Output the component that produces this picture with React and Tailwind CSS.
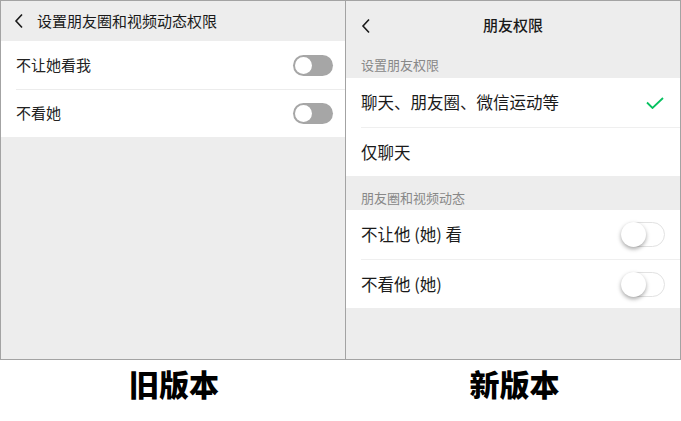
import React from "react";

const font = { fontFamily: '"Noto Sans CJK SC", "Noto Sans", sans-serif' };

function Chevron() {
  return (
    <svg width="10" height="16" viewBox="0 0 10 16" fill="none">
      <path d="M8 1.5 L2 8 L8 14.5" stroke="#1a1a1a" strokeWidth="1.6" />
    </svg>
  );
}

function OldToggle() {
  return (
    <div className="w-[40px] h-[21px] rounded-full bg-[#a6a6a6] flex items-center px-[2px]">
      <div className="w-[17px] h-[17px] rounded-full bg-white" />
    </div>
  );
}

function NewToggle() {
  return (
    <div className="relative w-[44px] h-[25px] rounded-full border border-[#e2e2e2] bg-white">
      <div className="absolute left-[-1px] top-[-1px] w-[25px] h-[25px] rounded-full bg-white shadow-[0_2px_4px_rgba(0,0,0,0.35)]" />
    </div>
  );
}

function OldPanel() {
  return (
    <div className="w-[345px] border-r border-[#a3a3a3] bg-[#ededed] flex flex-col">
      <div className="h-[40px] flex items-center pl-[13px] gap-[13px]">
        <Chevron />
        <span className="text-[15px] text-[#1a1a1a]">设置朋友圈和视频动态权限</span>
      </div>
      <div className="bg-white">
        <div className="h-[48px] flex items-center justify-between pl-[15px] pr-[12px]">
          <span className="text-[15px] text-[#222]">不让她看我</span>
          <OldToggle />
        </div>
        <div className="ml-[15px] border-t border-[#ececec]" />
        <div className="h-[47px] flex items-center justify-between pl-[15px] pr-[12px]">
          <span className="text-[15px] text-[#222]">不看她</span>
          <OldToggle />
        </div>
      </div>
    </div>
  );
}

function NewPanel() {
  return (
    <div className="flex-1 bg-[#ededed] flex flex-col">
      <div className="h-[49px] relative flex items-center justify-center">
        <div className="absolute left-[15px] top-[17px]">
          <Chevron />
        </div>
        <span className="text-[15px] font-medium text-[#1a1a1a]">朋友权限</span>
      </div>
      <div className="h-[28px] flex items-center pt-[2px] pl-[15px] text-[13px] text-[#888]">设置朋友权限</div>
      <div className="bg-white">
        <div className="h-[49px] flex items-center justify-between pl-[15px] pr-[16px]">
          <span className="text-[16.5px] text-[#1a1a1a]">聊天、朋友圈、微信运动等</span>
          <svg width="18" height="12" viewBox="0 0 18 12" fill="none">
            <path d="M1 5.5 L6.5 11 L17 1" stroke="#07c160" strokeWidth="1.8" />
          </svg>
        </div>
        <div className="ml-[15px] border-t border-[#efefef]" />
        <div className="h-[48px] flex items-center pl-[15px]">
          <span className="text-[16.5px] text-[#1a1a1a]">仅聊天</span>
        </div>
      </div>
      <div className="h-[34px] flex items-end pb-[3px] pl-[15px] text-[13px] text-[#888]">朋友圈和视频动态</div>
      <div className="bg-white">
        <div className="h-[49px] flex items-center justify-between pl-[15px] pr-[15px]">
          <span className="text-[16.5px] text-[#1a1a1a]">不让他 (她) 看</span>
          <NewToggle />
        </div>
        <div className="ml-[15px] border-t border-[#efefef]" />
        <div className="h-[48px] flex items-center justify-between pl-[15px] pr-[15px]">
          <span className="text-[16.5px] text-[#1a1a1a]">不看他 (她)</span>
          <NewToggle />
        </div>
      </div>
    </div>
  );
}

export default function App() {
  return (
    <div className="w-[681px] h-[421px] bg-white" style={font}>
      <div className="h-[360px] border border-[#a3a3a3] flex">
        <OldPanel />
        <NewPanel />
      </div>
      <div className="flex h-[46px] items-center">
        <div className="w-[348px] text-center text-[30px] font-black text-black">旧版本</div>
        <div className="flex-1 text-center text-[30px] font-black text-black">新版本</div>
      </div>
    </div>
  );
}
